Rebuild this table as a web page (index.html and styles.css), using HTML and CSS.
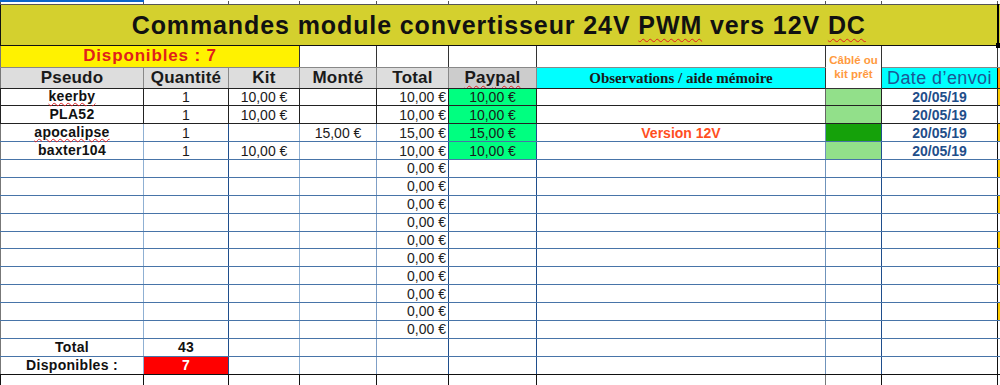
FILE: index.html
```html
<!DOCTYPE html>
<html lang="fr">
<head>
<meta charset="utf-8">
<title>Commandes module convertisseur 24V PWM vers 12V DC</title>
<link rel="stylesheet" href="styles.css">
</head>
<body>
<table class="sheet">
  <colgroup>
    <col class="c-a"><col class="c-b"><col class="c-c"><col class="c-d"><col class="c-e">
    <col class="c-f"><col class="c-g"><col class="c-h"><col class="c-i"><col class="c-j">
  </colgroup>
  <tbody>
    <tr class="strip">
      <td class="sel"></td><td></td><td></td><td></td><td></td><td></td><td></td><td></td><td></td><td></td>
    </tr>
    <tr class="title-row">
      <td colspan="9" class="title">Commandes module convertisseur 24V <span class="spell">PWM</span> vers 12V <span class="spell">DC</span></td>
      <td class="title-end"></td>
    </tr>
    <tr class="dispo-row">
      <td colspan="3" class="dispo">Disponibles : 7</td>
      <td></td><td></td><td></td><td></td>
      <td rowspan="2" class="cable-h">Câblé ou<br>kit prêt</td>
      <td></td><td></td>
    </tr>
    <tr class="head">
      <th>Pseudo</th><th>Quantité</th><th>Kit</th><th>Monté</th><th>Total</th>
      <th class="pay-h"><span class="spell">Paypal</span></th>
      <th class="obs-h">Observations / aide mémoire</th>
      <th class="date-h">Date d’envoi</th>
      <th class="edge-o"></th>
    </tr>
    <tr class="row dark">
      <td class="name"><span class="spell">keerby</span></td><td>1</td><td>10,00 €</td><td></td><td class="num">10,00 €</td>
      <td class="paid">10,00 €</td><td></td><td class="ok"></td><td class="date">20/05/19</td><td class="edge-y"></td>
    </tr>
    <tr class="row dark">
      <td class="name">PLA52</td><td>1</td><td>10,00 €</td><td></td><td class="num">10,00 €</td>
      <td class="paid">10,00 €</td><td></td><td class="ok"></td><td class="date">20/05/19</td><td></td>
    </tr>
    <tr class="row blue">
      <td class="name"><span class="spell">apocalipse</span></td><td>1</td><td></td><td>15,00 €</td><td class="num">15,00 €</td>
      <td class="paid">15,00 €</td><td class="note">Version 12V</td><td class="done"></td><td class="date">20/05/19</td><td class="edge-y"></td>
    </tr>
    <tr class="row blue">
      <td class="name">baxter104</td><td>1</td><td>10,00 €</td><td></td><td class="num">10,00 €</td>
      <td class="paid">10,00 €</td><td></td><td class="ok"></td><td class="date">20/05/19</td><td></td>
    </tr>
    <tr class="row blue"><td></td><td></td><td></td><td></td><td class="num">0,00 €</td><td></td><td></td><td></td><td></td><td class="edge-y"></td></tr>
    <tr class="row blue"><td></td><td></td><td></td><td></td><td class="num">0,00 €</td><td></td><td></td><td></td><td></td><td></td></tr>
    <tr class="row blue"><td></td><td></td><td></td><td></td><td class="num">0,00 €</td><td></td><td></td><td></td><td></td><td class="edge-y"></td></tr>
    <tr class="row blue"><td></td><td></td><td></td><td></td><td class="num">0,00 €</td><td></td><td></td><td></td><td></td><td></td></tr>
    <tr class="row blue"><td></td><td></td><td></td><td></td><td class="num">0,00 €</td><td></td><td></td><td></td><td></td><td class="edge-y"></td></tr>
    <tr class="row blue"><td></td><td></td><td></td><td></td><td class="num">0,00 €</td><td></td><td></td><td></td><td></td><td></td></tr>
    <tr class="row blue"><td></td><td></td><td></td><td></td><td class="num">0,00 €</td><td></td><td></td><td></td><td></td><td class="edge-y"></td></tr>
    <tr class="row blue"><td></td><td></td><td></td><td></td><td class="num">0,00 €</td><td></td><td></td><td></td><td></td><td></td></tr>
    <tr class="row blue"><td></td><td></td><td></td><td></td><td class="num">0,00 €</td><td></td><td></td><td></td><td></td><td class="edge-y"></td></tr>
    <tr class="row blue"><td></td><td></td><td></td><td></td><td class="num">0,00 €</td><td></td><td></td><td></td><td></td><td></td></tr>
    <tr class="row blue">
      <td class="name">Total</td><td class="name">43</td><td></td><td></td><td></td><td></td><td></td><td></td><td></td><td></td>
    </tr>
    <tr class="row blue">
      <td class="name">Disponibles :</td><td class="left">7</td><td></td><td></td><td></td><td></td><td></td><td></td><td></td><td></td>
    </tr>
    <tr class="row end">
      <td></td><td></td><td></td><td></td><td></td><td></td><td></td><td></td><td></td><td></td>
    </tr>
  </tbody>
</table>
</body>
</html>
```

FILE: styles.css
```css
* { box-sizing: border-box; }
html, body { margin: 0; padding: 0; background: #fff; overflow: hidden; }
body {
  width: 1000px;
  height: 385px;
  font-family: "Liberation Sans", Arial, sans-serif;
  font-size: 14px;
  color: #1a1a1a;
}

.sheet {
  border-collapse: collapse;
  table-layout: fixed;
  width: 1000px;
}
.c-a { width: 143px; }
.c-b { width: 85px; }
.c-c { width: 71px; }
.c-d { width: 77px; }
.c-e { width: 72px; }
.c-f { width: 88px; }
.c-g { width: 289px; }
.c-h { width: 56px; }
.c-i { width: 116px; }
.c-j { width: 3px; }

.sheet td, .sheet th {
  padding: 0 2px;
  overflow: hidden;
  white-space: nowrap;
  text-align: center;
  vertical-align: middle;
  line-height: 16px;
  border: 1px solid #333;
}
.sheet td { font-weight: normal; font-size: 14px; }
.sheet tr > :first-child { border-left-color: #777; }

.sheet .spell {
  text-decoration-line: underline;
  text-decoration-style: wavy;
  text-decoration-color: #e02020;
  text-decoration-thickness: 1px;
  text-underline-offset: 1px;
}

/* strip of the row above */
.sheet .strip { height: 3px; }
.sheet .strip td { padding: 0; border-top: 0; border-color: #555; height: 3px; }
.sheet .strip td.sel { border-top: 2px solid #0b63c9; }

/* title */
.sheet .title-row { height: 41px; }
.sheet td.title {
  position: relative;
  overflow: visible;
  background: #d4d02e;
  border: 1px solid #111;
  border-right: 2px solid #000;
  font-size: 25px;
  line-height: 28px;
  font-weight: bold;
  letter-spacing: 0.9px;
  color: #111;
}
.sheet td.title::after {
  content: "";
  position: absolute;
  right: -4px;
  bottom: -3px;
  width: 5px;
  height: 5px;
  background: #000;
}
.sheet .title .spell { text-underline-offset: 4px; }
.sheet td.title-end { background: #d4d02e; padding: 0; border-color: #d4d02e #d4d02e #555 #000; }

/* disponibles row */
.sheet .dispo-row { height: 22px; }
.sheet .dispo-row td { border-color: #333; border-bottom-color: #888; }
.sheet .dispo-row td.dispo {
  background: #fff200;
  color: #e0201c;
  font-size: 17px;
  font-weight: bold;
  letter-spacing: 0.85px;
  border-left-color: #777;
}
.sheet .dispo-row td.cable-h {
  color: #ff9a40;
  font-size: 11.5px;
  line-height: 14px;
  font-weight: bold;
  white-space: normal;
  border-bottom-color: #333;
  padding: 0;
}

/* header */
.sheet .head { height: 21px; }
.sheet .head th {
  background: #dddddd;
  border-color: #888;
  border-bottom-color: #222;
  font-size: 17px;
  line-height: 18px;
  font-weight: bold;
  letter-spacing: 0.2px;
  color: #1a1a1a;
}
.sheet .head th:first-child { border-left-color: #777; }
.sheet .head .pay-h { background: #cccccc; }
.sheet .head .spell { text-underline-offset: 2px; }
.sheet .head .obs-h {
  background: #00ffff;
  font-family: "Liberation Serif", "Times New Roman", serif;
  font-size: 15px;
  font-weight: bold;
  letter-spacing: 0;
  border-color: #888 #666 #222 #1f4e8c;
}
.sheet .head .date-h {
  background: #00ffff;
  color: #1d5794;
  font-weight: normal;
  font-size: 18px;
  letter-spacing: 0.4px;
  border-left-color: #333;
  border-right-color: #000;
}
.sheet .head .edge-o { background: #ff9a00; padding: 0; border-color: #000 #ff9a00 #222 #000; }

/* data rows */
.sheet .row { height: 17.875px; }
.sheet .row td { padding: 0 2px; }
.sheet .row.dark td { border-color: #222; }
.sheet .row.blue td { border-color: #4774a8; }
.sheet .row.blue td:nth-child(1) { border-right-color: #8fb0d3; }
.sheet .row.blue td:nth-child(2) { border-right-color: #1f4e8c; }
.sheet .row.blue td:nth-child(3) { border-right-color: #8fb0d3; }
.sheet .row.blue td:nth-child(4) { border-right-color: #7f9fc6; }
.sheet .row.blue td:nth-child(5) { border-right-color: #1f4e8c; }
.sheet .row.blue td:nth-child(6) { border-right-color: #1f4e8c; }
.sheet .row.blue td:nth-child(7) { border-right-color: #6f93bb; }
.sheet .row.blue td:nth-child(8) { border-right-color: #1f4e8c; }
.sheet .row.blue td:nth-child(9) { border-right-color: #111; }
.sheet .row.blue td:first-child { border-left-color: #777; }
.sheet .row.blue:nth-last-child(2) td { border-bottom-color: #111; }
.sheet .row td:nth-child(10) { padding: 0; border-right-color: transparent; }
.sheet .row.dark td:nth-child(7) { border-right-color: #666; }

.sheet .row.end { height: 20px; }
.sheet .row.end td { border-color: #111; border-bottom: 0; }
.sheet .row.end td:nth-child(7) { border-right-color: #777; }

.sheet td.name { font-weight: bold; color: #111; letter-spacing: 0.3px; overflow: visible; line-height: 15px; }
.sheet td.num { text-align: right; padding-right: 2px; color: #222; }
.sheet td.paid { background: #00ff80; }
.sheet td.note { color: #ff4f1f; font-weight: bold; }
.sheet td.ok { background: #92e08a; }
.sheet td.done { background: #15a10a; }
.sheet td.date { color: #1f4e8a; font-weight: bold; }
.sheet td.edge-y { background: #ffcc00; }
.sheet td.left {
  background: #ff0000;
  color: #fff;
  font-weight: bold;
}
```
